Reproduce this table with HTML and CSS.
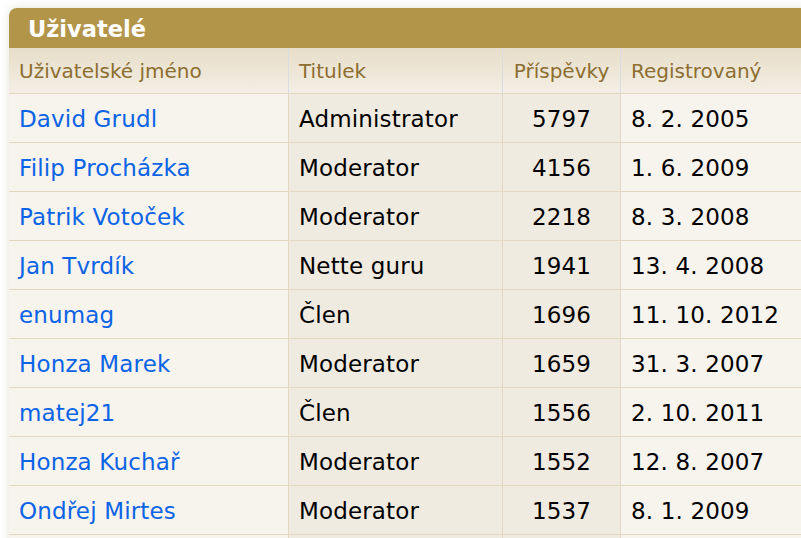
FILE: index.html
```html
<!DOCTYPE html>
<html lang="cs">
<head>
<meta charset="utf-8">
<title>Uživatelé</title>
<link rel="stylesheet" href="styles.css">
</head>
<body>
<div class="page">
  <section class="panel">
    <h2 class="panel-title">Uživatelé</h2>
    <table class="users">
      <colgroup>
        <col class="c-name"><col class="c-title"><col class="c-posts"><col class="c-reg">
      </colgroup>
      <thead>
        <tr>
          <th>Uživatelské jméno</th>
          <th>Titulek</th>
          <th class="num">Příspěvky</th>
          <th>Registrovaný</th>
        </tr>
      </thead>
      <tbody>
        <tr><td><a href="#">David Grudl</a></td><td class="dark">Administrator</td><td class="num dark">5797</td><td>8. 2. 2005</td></tr>
        <tr><td><a href="#">Filip Procházka</a></td><td class="dark">Moderator</td><td class="num dark">4156</td><td>1. 6. 2009</td></tr>
        <tr><td><a href="#">Patrik Votoček</a></td><td class="dark">Moderator</td><td class="num dark">2218</td><td>8. 3. 2008</td></tr>
        <tr><td><a href="#">Jan Tvrdík</a></td><td class="dark">Nette guru</td><td class="num dark">1941</td><td>13. 4. 2008</td></tr>
        <tr><td><a href="#">enumag</a></td><td class="dark">Člen</td><td class="num dark">1696</td><td>11. 10. 2012</td></tr>
        <tr><td><a href="#">Honza Marek</a></td><td class="dark">Moderator</td><td class="num dark">1659</td><td>31. 3. 2007</td></tr>
        <tr><td><a href="#">matej21</a></td><td class="dark">Člen</td><td class="num dark">1556</td><td>2. 10. 2011</td></tr>
        <tr><td><a href="#">Honza Kuchař</a></td><td class="dark">Moderator</td><td class="num dark">1552</td><td>12. 8. 2007</td></tr>
        <tr><td><a href="#">Ondřej Mirtes</a></td><td class="dark">Moderator</td><td class="num dark">1537</td><td>8. 1. 2009</td></tr>
        <tr class="filler"><td></td><td class="dark"></td><td class="num dark"></td><td></td></tr>
      </tbody>
    </table>
  </section>
</div>
</body>
</html>
```

FILE: styles.css
```css
html, body {
  margin: 0;
  padding: 0;
  background: #ffffff;
  overflow: hidden;
}

.page {
  padding: 8px 0 0 9px;
  width: 900px;
  font-family: "DejaVu Sans", Verdana, sans-serif;
}

.panel {
  width: 861px;
  box-shadow: 0 0 8px rgba(90, 70, 30, 0.16);
  border-top-left-radius: 8px;
  background: #f7f4ed;
}

.panel-title {
  margin: 0;
  height: 40px;
  padding: 2px 0 0 19px;
  box-sizing: border-box;
  line-height: 38px;
  font-size: 22.5px;
  font-weight: bold;
  color: #ffffff;
  background: #b3954a;
  border-top-left-radius: 8px;
}

.users {
  width: 861px;
  table-layout: fixed;
  border-collapse: separate;
  border-spacing: 0;
}

.c-name { width: 280px; }
.c-title { width: 214px; }
.c-posts { width: 118px; }
.c-reg { width: 249px; }

.users th {
  padding: 2px 10px 0 10px;
  line-height: 43px;
  font-size: 20px;
  font-weight: normal;
  text-align: left;
  color: #8c6e30;
  background: linear-gradient(#e7ddc8, #f4efe5);
  border-bottom: 1px solid #e2d7bf;
  border-right: 1px solid #d7dde0;
  white-space: nowrap;
}

.users td {
  padding: 2px 10px 0 10px;
  line-height: 46px;
  font-size: 23px;
  letter-spacing: 0.15px;
  color: #000000;
  background: #f7f4ed;
  border-bottom: 1px solid #e3d8c0;
  border-right: 1px solid #e3d8c0;
  white-space: nowrap;
}

.users tr.filler td {
  height: 20px;
  line-height: 20px;
}

.users td.dark {
  background: #f0ebe0;
}

.users .num {
  text-align: center;
}

.users a {
  color: #0b63e6;
  text-decoration: none;
}
```
